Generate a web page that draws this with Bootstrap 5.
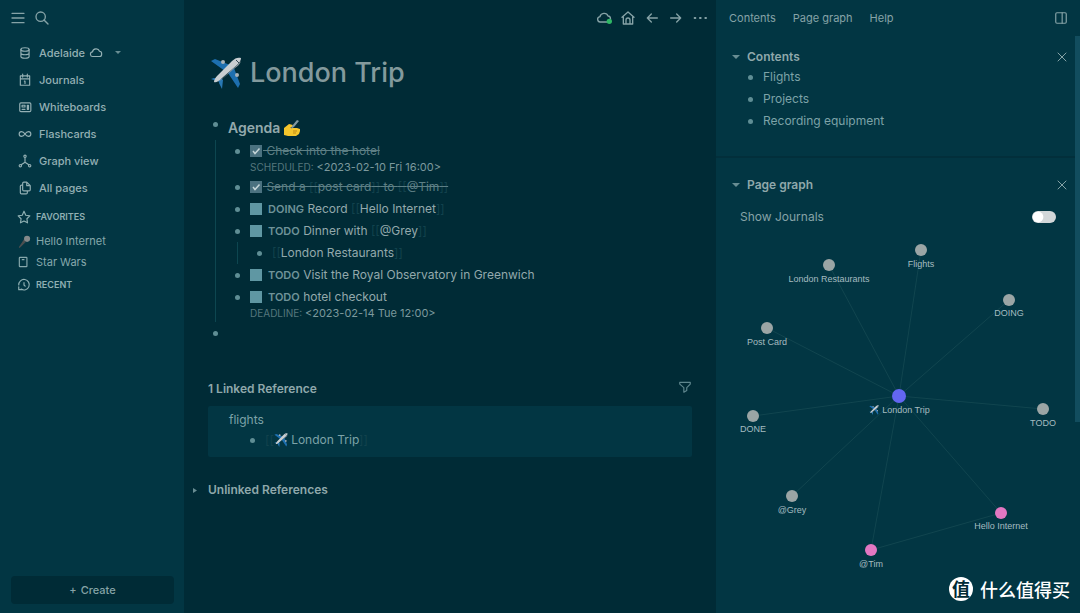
<!DOCTYPE html>
<html lang="en" data-bs-theme="dark">
<head>
<meta charset="utf-8">
<meta name="viewport" content="width=device-width, initial-scale=1">
<title>London Trip</title>
<link href="https://cdn.jsdelivr.net/npm/bootstrap@5.3.0/dist/css/bootstrap.min.css" rel="stylesheet">
<style>
  :root { --deep: #002b36; --panel: #023643; --ink: #93a9ac; --dim: #688d93; --soft: #8fb0b3; }
  body { background: var(--deep); color: var(--ink); font-family: Inter, "Noto Sans CJK SC", sans-serif; font-size: 12px; line-height: 18px; }
  a { color: inherit; text-decoration: none; }
  button { background: none; border: 0; padding: 0; color: inherit; display: flex; }
  svg.ic { width: 14px; height: 14px; fill: none; stroke: currentColor; stroke-width: 2; stroke-linecap: round; stroke-linejoin: round; flex: none; }
  svg.ic.lg { width: 16px; height: 16px; }
  svg.ic.sm { width: 12px; height: 12px; }
  svg.ic.funnel { color: #5f878e; }
  svg.emo { width: 16px; height: 16px; flex: none; vertical-align: -3px; }
  svg.emo.sm { width: 14px; height: 14px; }
  .tri { width: 8px; height: 5px; fill: var(--dim); flex: none; display: block; }
  .topbar { height: 36px; color: #86a3a7; }

  .side-left { width: 184px; background: var(--panel); color: var(--soft); }
  .side-top { padding-left: 10px; }
  .side-nav { padding: 3px 0 3px 18px; }
  .side-nav a, .side-nav button { height: 27px; display: flex; align-items: center; gap: 7px; font-size: 11px; font-weight: 500; color: #94b0b4; }
  .side-sub { padding-left: 17px; font-size: 11px; color: #86a8ac; }
  .side-sub a { display: flex; align-items: center; gap: 5px; height: 21px; }
  .side-head { font-size: 9px; font-weight: 600; text-transform: uppercase; display: flex; align-items: center; gap: 5px; height: 26px; margin: 0; line-height: 26px; color: #8fb0b3; }
  .create { background: var(--deep); border-radius: 4px; height: 28px; font-size: 11px; font-weight: 500; color: #86a3a7; margin: 0 10px 9px 11px; }

  .page-body { padding: 19px 24px 0; }
  .page-title { font-size: 27px; font-weight: 500; line-height: 36px; color: #839a9d; gap: 8px; margin: 0 0 24px 2px; }
  .page-title svg { width: 32px; height: 32px; }
  ul.outline, ul.outline ul { list-style: none; margin: 0; padding: 0; }
  ul.outline li { position: relative; }
  ul.outline ul { margin-left: 22px; position: relative; }
  ul.outline ul::before { content: ""; position: absolute; left: -15px; top: 0; bottom: 0; border-left: 1px solid #0d4650; }
  .blk { display: flex; padding: 2px 0; min-height: 22px; }
  .blk::before { content: ""; flex: none; width: 5px; height: 5px; border-radius: 50%; background: #5f8e95; margin: 7px 10px 0 5px; }
  .blk.head { padding: 4px 0; height: 25px; }
  .blk.head::before { margin: 3px 10px 0 5px; }
  .blk h2 { font-size: 14px; line-height: 18px; font-weight: 600; margin: 0; color: var(--ink); }
  .blk label { display: block; height: 18px; white-space: nowrap; }
  .blk input { appearance: none; width: 12px; height: 12px; margin: 0 1px 0 0; background: #5f97a3; vertical-align: -2px; }
  .blk input:checked { background: #4b7280 url("data:image/svg+xml,%3Csvg xmlns='http://www.w3.org/2000/svg' viewBox='0 0 12 12'%3E%3Cpath d='M3 6l2 2.5L9.5 3.5' fill='none' stroke='%23c5d5d8' stroke-width='1.5'/%3E%3C/svg%3E"); }
  .finished { text-decoration: line-through; color: #5d7f85; }
  .tag { font-size: 11px; font-weight: 600; color: #6f9399; margin: 0 0 0 5px; }
  .bk { color: #12424d; }
  .when { font-size: 10px; line-height: 14px; color: #55777d; }
  .when time { font-size: 11px; color: #7c999d; }
  .sec { font-size: 12px; line-height: 18px; font-weight: 600; margin: 0; color: #8fa8ab; }
  .refs { background: var(--panel); padding: 5px 21px 6px; border-radius: 2px; color: #7da3a8; }
  .unlinked { gap: 8px; margin: 24px 0 0 -16px; }

  .side-right { width: 364px; background: var(--panel); color: #86a3a7; position: relative; overflow: hidden; }
  .tabs { font-size: 11px; gap: 17px; padding-left: 13px; }
  .pane-head { height: 22px; padding: 0 12px 0 16px; gap: 7px; }
  ul.right-list { padding: 0 0 24px 27px; color: #7da3a8; }
  .rule { height: 2px; background: #022f3b; }
  .journal-row { padding: 12px 24px 0; }
  .form-check-input.tog { width: 24px; height: 12px; margin: 0; border: 0; float: none; background-color: #d2d7d9; --bs-form-switch-bg: url("data:image/svg+xml,%3Csvg xmlns='http://www.w3.org/2000/svg' viewBox='-4 -4 8 8'%3E%3Ccircle r='3.6' fill='%23fff'/%3E%3C/svg%3E") !important; }
  .graph text { font: 9px "Liberation Sans", Arial, sans-serif; fill: #a5bcc0; text-anchor: middle; }
  .graph line { stroke: #11454f; }
  .thumb { position: absolute; right: 0; top: 36px; width: 5px; height: 63%; background: #124d5e; }
  .stamp { position: absolute; right: 10px; bottom: 11px; gap: 7px; color: #fff; font: 500 18px/26px "Noto Sans CJK SC", sans-serif; }
  .stamp b { width: 24px; height: 24px; line-height: 23px; border-radius: 50%; background: #fff; color: var(--deep); text-align: center; font-weight: 700; }
</style>
</head>
<body>
<svg width="0" height="0" class="position-absolute" aria-hidden="true">
  <symbol id="plane" viewBox="0 0 32 32">
    <path d="M1 4l4-2 15 6-5 6zM28 31l2-4-6-16-6 5z" fill="#1d6faf"/>
    <path d="M1 22l3-1 8 1-2 3zM10 20l3 3-1 9-3-6z" fill="#2878b4"/>
    <circle cx="13" cy="5" r="2" fill="#a7b2b8"/><circle cx="27" cy="18" r="2" fill="#a7b2b8"/>
    <path d="M31 1c-3-1-6 0-9 3L8 18c-3 3-4 5-4 7 2 1 5-1 8-4l15-13c3-3 4-5 4-7z" fill="#c9ced1"/>
    <path d="M31 4c-1 3-3 5-6 7L11 23c-2 1-4 2-6 2 3 0 5-2 8-4l14-13z" fill="#8d999f"/>
    <path d="M26 3l3 3" stroke="#344955" stroke-width="1"/>
  </symbol>
</svg>
<div class="d-flex min-vh-100">
  <aside class="side-left d-flex flex-column flex-shrink-0">
    <div class="topbar side-top d-flex align-items-center gap-2">
      <button aria-label="Menu"><svg class="ic lg" viewBox="0 0 24 24"><path d="M3 5h18M3 12h18M3 19h18"/></svg></button>
      <button aria-label="Search"><svg class="ic lg" viewBox="0 0 24 24"><circle cx="10" cy="10" r="7"/><path d="M21 21l-6-6"/></svg></button>
    </div>
    <nav class="side-nav d-flex flex-column">
      <button><svg class="ic" viewBox="0 0 24 24"><ellipse cx="12" cy="6" rx="7" ry="3"/><path d="M5 6v12c0 4 14 4 14 0V6M5 12c0 4 14 4 14 0"/></svg><span class="d-flex align-items-center gap-1">Adelaide<svg class="ic" viewBox="0 0 24 24"><path d="M7 18a4 4 0 0 1-1-8c1-6 10-7 12-1 5 0 5 9 0 9z"/></svg></span><svg class="tri ms-1" viewBox="0 0 8 5"><path d="M1 1h6L4 4z"/></svg></button>
      <a href="#"><svg class="ic" viewBox="0 0 24 24"><path d="M4 5h16v16H4zM4 10h16M8 2v5M16 2v5M11 14h1v4"/></svg>Journals</a>
      <a href="#"><svg class="ic" viewBox="0 0 24 24"><rect x="3" y="5" width="19" height="15" rx="2"/><path d="M7 9h5v3H7zM16 9h2v7h-2zM7 16h5"/></svg>Whiteboards</a>
      <a href="#"><svg class="ic" viewBox="0 0 24 24"><path d="M12 12c-2-3-4-4-6-4a4 4 0 0 0 0 8c2 0 4-1 6-4s4-4 6-4a4 4 0 0 1 0 8c-2 0-4-1-6-4"/></svg>Flashcards</a>
      <a href="#"><svg class="ic" viewBox="0 0 24 24"><circle cx="12" cy="4" r="2"/><circle cx="4" cy="20" r="2"/><circle cx="20" cy="20" r="2"/><path d="M12 6v8M5.500 18.500L12 14l6.500 4.500"/></svg>Graph view</a>
      <a href="#"><svg class="ic" viewBox="0 0 24 24"><path d="M15 2h-5a2 2 0 0 0-2 2v11a2 2 0 0 0 2 2h9a2 2 0 0 0 2-2V8zM15 2v6h6M8 7H6a2 2 0 0 0-2 2v11a2 2 0 0 0 2 2h8a2 2 0 0 0 2-2v-3"/></svg>All pages</a>
    </nav>
    <div class="side-sub">
      <h2 class="side-head"><svg class="ic" viewBox="0 0 24 24"><path d="M12 2l3 7 7 1-5 5 1 7-6-3-6 3 1-7-5-5 7-1z"/></svg>Favorites</h2>
      <a href="#"><svg class="emo sm" viewBox="0 0 16 16"><path d="M2 15l1 1 7-7-2-3z" fill="#4b4f50"/><circle cx="11.500" cy="5.500" r="3.500" fill="#85898a"/></svg>Hello Internet</a>
      <a href="#"><svg class="ic" viewBox="0 0 24 24"><rect x="4" y="4" width="13" height="16" rx="1"/><path d="M9 8h3"/></svg>Star Wars</a>
      <h2 class="side-head"><svg class="ic" viewBox="0 0 24 24"><path d="M3 12a9 9 0 1 1 4 7M3 15v5h5M12 8v4l2 2"/></svg>Recent</h2>
    </div>
    <button class="create mt-auto align-items-center justify-content-center gap-1"><span>+</span>Create</button>
  </aside>

  <main class="flex-grow-1">
    <div class="topbar d-flex align-items-center justify-content-end gap-2 px-2">
      <button aria-label="Sync"><svg class="ic lg" viewBox="0 0 24 24"><path d="M7 18a4 4 0 0 1-1-8c1-6 10-7 12-1 5 0 5 9 0 9z"/><circle cx="20" cy="17" r="4" fill="#2fb765" stroke="none"/></svg></button>
      <button aria-label="Home"><svg class="ic lg" viewBox="0 0 24 24"><path d="M3 11l9-8 9 8M5 10v11h14V10M9 21v-6a2 2 0 0 1 6 0v6"/></svg></button>
      <button aria-label="Back"><svg class="ic lg" viewBox="0 0 24 24"><path d="M20 12H5M11 6l-6 6 6 6"/></svg></button>
      <button aria-label="Forward"><svg class="ic lg" viewBox="0 0 24 24"><path d="M4 12h15M13 6l6 6-6 6"/></svg></button>
      <button aria-label="More"><svg class="ic lg" viewBox="0 0 24 24"><path d="M4 12h1M12 12h1M20 12h1" stroke-width="3"/></svg></button>
    </div>
    <div class="page-body">
      <h1 class="page-title d-flex align-items-center"><svg><use href="#plane"/></svg>London Trip</h1>
      <ul class="outline">
        <li><div class="blk head"><h2>Agenda <svg class="emo" viewBox="0 0 16 16"><path d="M0 8l5-4 4 1-1 2-2 1 7 0 3 1v2l-1 3-3 2H4l-4-1z" fill="#f5c62c"/><path d="M9 11h4M9 13h3" stroke="#c08a14"/><path d="M13 0l2 1-5 6-3 2 1-3z" fill="#7f98a1"/></svg></h2></div>
          <ul>
            <li><div class="blk"><div><label class="finished"><input type="checkbox" checked> Check into the hotel</label><div class="when">SCHEDULED: <time>&lt;2023-02-10 Fri 16:00&gt;</time></div></div></div></li>
            <li><div class="blk"><label class="finished"><input type="checkbox" checked> Send a <span class="bk">[[</span>post card<span class="bk">]]</span> to <span class="bk">[[</span>@Tim<span class="bk">]]</span></label></div></li>
            <li><div class="blk"><label><input type="checkbox"><span class="tag">DOING</span> Record <span class="bk">[[</span>Hello Internet<span class="bk">]]</span></label></div></li>
            <li><div class="blk"><label><input type="checkbox"><span class="tag">TODO</span> Dinner with <span class="bk">[[</span>@Grey<span class="bk">]]</span></label></div>
              <ul><li><div class="blk"><a href="#"><span class="bk">[[</span>London Restaurants<span class="bk">]]</span></a></div></li></ul></li>
            <li><div class="blk"><label><input type="checkbox"><span class="tag">TODO</span> Visit the Royal Observatory in Greenwich</label></div></li>
            <li><div class="blk"><div><label><input type="checkbox"><span class="tag">TODO</span> hotel checkout</label><div class="when">DEADLINE: <time>&lt;2023-02-14 Tue 12:00&gt;</time></div></div></div></li>
          </ul></li>
        <li><div class="blk"></div></li>
      </ul>
      <div class="d-flex justify-content-between align-items-center mt-4 pt-2">
        <h2 class="sec pt-1">1 Linked Reference</h2>
        <button aria-label="Filter"><svg class="ic funnel" viewBox="0 0 24 24"><path d="M3 4h18v3l-6 6v5l-5 3v-8L3 7z"/></svg></button>
      </div>
      <div class="refs mt-2">
        <a href="#">flights</a>
        <ul class="outline ms-3"><li><div class="blk"><a href="#"><span class="bk">[[</span><svg class="emo sm"><use href="#plane"/></svg> London Trip<span class="bk">]]</span></a></div></li></ul>
      </div>
      <button class="unlinked align-items-center"><svg class="tri" viewBox="0 0 8 5"><path d="M1 0v5l4-2.500z"/></svg><span class="sec">Unlinked References</span></button>
    </div>
  </main>

  <aside class="side-right flex-shrink-0">
    <div class="topbar d-flex align-items-center justify-content-between">
      <div class="tabs d-flex"><a href="#">Contents</a><a href="#">Page graph</a><a href="#">Help</a></div>
      <button aria-label="Toggle sidebar" class="me-2 pe-1"><svg class="ic" viewBox="0 0 24 24"><rect x="3" y="3" width="18" height="18" rx="2"/><path d="M14 3v18"/></svg></button>
    </div>
    <div class="pane-head d-flex align-items-center mt-2 pt-1"><svg class="tri" viewBox="0 0 8 5"><path d="M0 0h8L4 4z"/></svg><h2 class="sec flex-grow-1">Contents</h2><button aria-label="Close contents"><svg class="ic sm" viewBox="0 0 24 24"><path d="M4 4l16 16M20 4L4 20"/></svg></button></div>
    <ul class="outline right-list"><li><div class="blk"><a href="#">Flights</a></div></li><li><div class="blk"><a href="#">Projects</a></div></li><li><div class="blk"><a href="#">Recording equipment</a></div></li></ul>
    <div class="rule"></div>
    <div class="pane-head d-flex align-items-center mt-3"><svg class="tri" viewBox="0 0 8 5"><path d="M0 0h8L4 4z"/></svg><h2 class="sec flex-grow-1">Page graph</h2><button aria-label="Close page graph"><svg class="ic sm" viewBox="0 0 24 24"><path d="M4 4l16 16M20 4L4 20"/></svg></button></div>
    <div class="form-switch journal-row d-flex align-items-center justify-content-between mb-1"><label for="journals">Show Journals</label><input id="journals" type="checkbox" role="switch" class="form-check-input tog"></div>
    <svg class="graph d-block w-100" viewBox="0 0 364 370">
      <g>
        <line x1="183" y1="166" x2="113" y2="35"/><line x1="183" y1="166" x2="205" y2="20"/><line x1="183" y1="166" x2="293" y2="70"/><line x1="183" y1="166" x2="51" y2="98"/><line x1="183" y1="166" x2="37" y2="186"/><line x1="183" y1="166" x2="327" y2="179"/><line x1="183" y1="166" x2="76" y2="266"/><line x1="183" y1="166" x2="285" y2="283"/><line x1="183" y1="166" x2="155" y2="320"/><line x1="155" y1="320" x2="285" y2="283"/>
      </g>
      <g fill="#9ba5a5"><circle cx="113" cy="35" r="6"/><circle cx="205" cy="20" r="6"/><circle cx="293" cy="70" r="6"/><circle cx="51" cy="98" r="6"/><circle cx="37" cy="186" r="6"/><circle cx="327" cy="179" r="6"/><circle cx="76" cy="266" r="6"/></g>
      <g fill="#e377c2"><circle cx="285" cy="283" r="6"/><circle cx="155" cy="320" r="6"/></g>
      <circle cx="183" cy="166" r="7" fill="#6366f1"/>
      <text x="113" y="52">London Restaurants</text><text x="205" y="37">Flights</text><text x="293" y="86">DOING</text><text x="51" y="115">Post Card</text><text x="37" y="202">DONE</text><text x="327" y="196">TODO</text><text x="76" y="283">@Grey</text><text x="285" y="299">Hello Internet</text><text x="155" y="337">@Tim</text>
      <use href="#plane" x="153" y="175" width="10" height="10"/><text x="190" y="183">London Trip</text>
    </svg>
    <div class="thumb"></div>
    <div class="stamp d-flex align-items-center"><b>值</b><span>什么值得买</span></div>
  </aside>
</div>
<script src="https://cdn.jsdelivr.net/npm/bootstrap@5.3.0/dist/js/bootstrap.bundle.min.js"></script>
</body>
</html>
